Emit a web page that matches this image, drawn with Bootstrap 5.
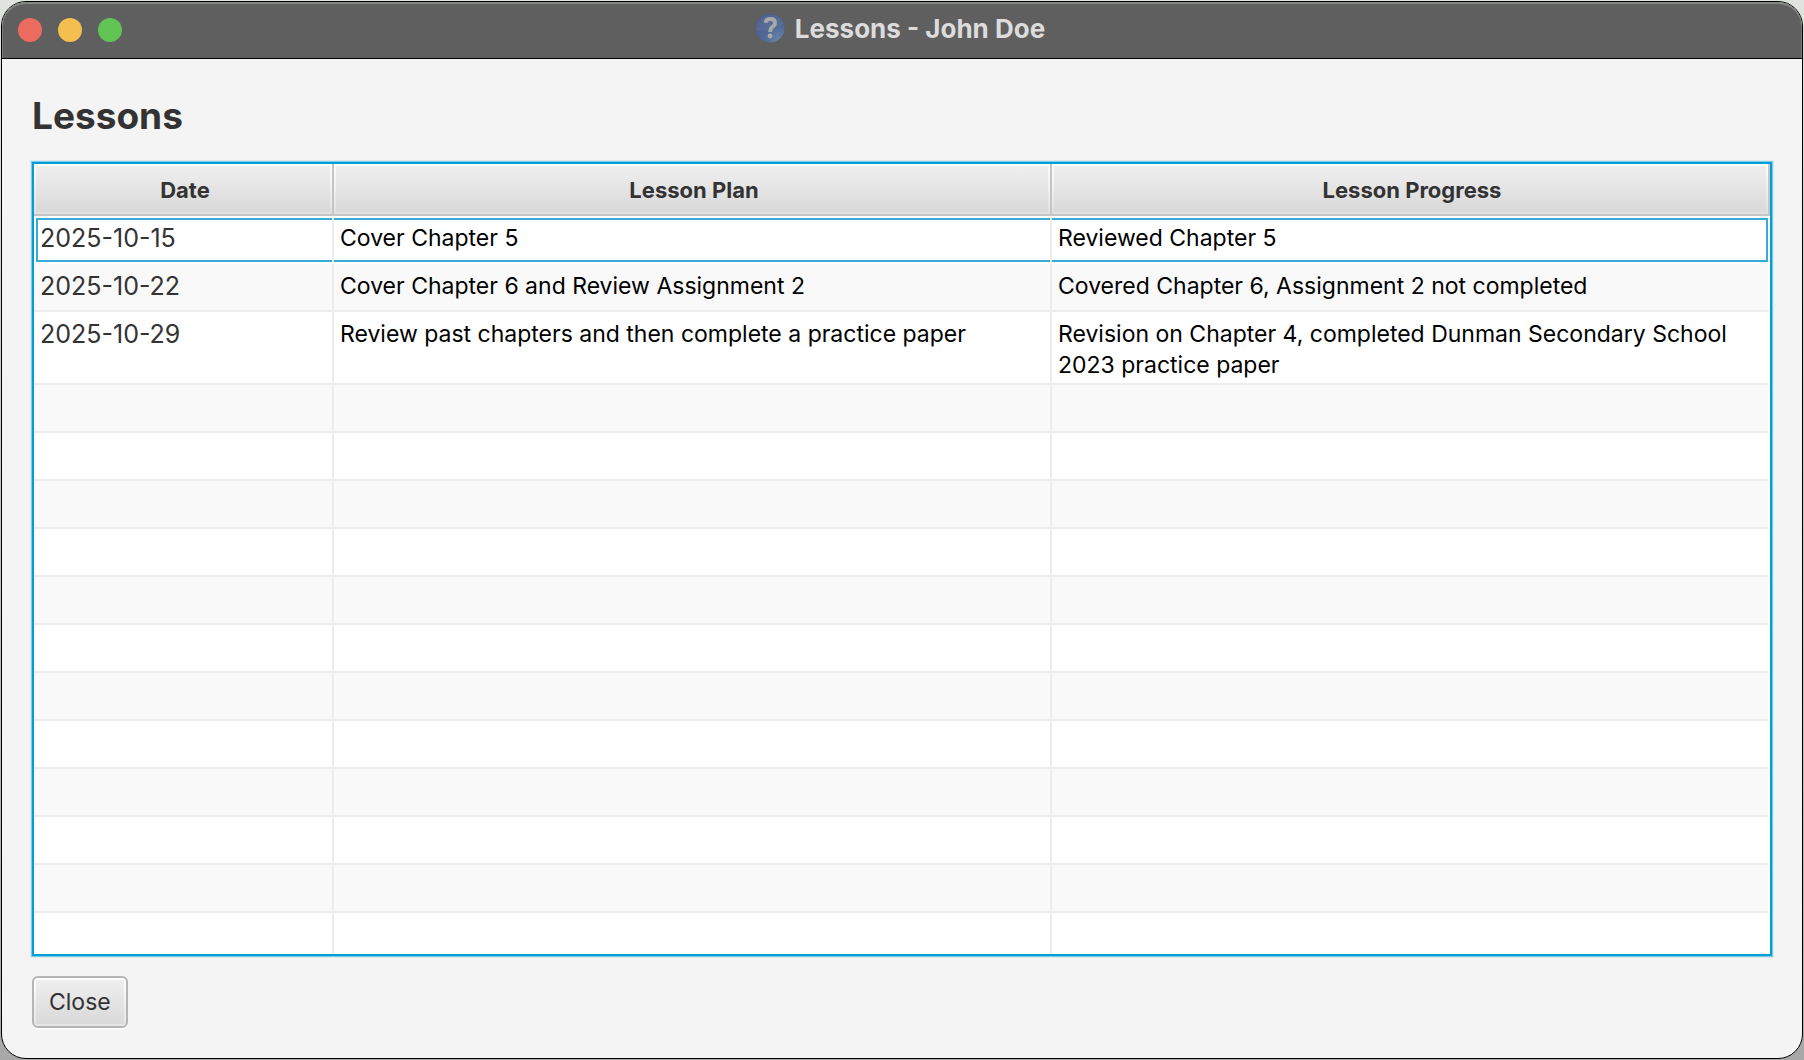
<!DOCTYPE html>
<html lang="en">
<head>
<meta charset="utf-8">
<meta name="viewport" content="width=device-width, initial-scale=1">
<title>Lessons - John Doe</title>
<link href="https://cdn.jsdelivr.net/npm/bootstrap@5.3.0/dist/css/bootstrap.min.css" rel="stylesheet">
<style>
  body {
    font-family: Inter, "Liberation Sans", sans-serif;
    font-size: 23px;
    line-height: 31px;
    color: #333;
    background: linear-gradient(#e0e4df, #a8a8a8);
  }
  .desktop { padding: 1px; }
  .app-window {
    background: #f4f4f4;
    border: 1px solid #000;
    border-radius: 25px;
  }
  .title-bar {
    height: 57px;
    padding: 0 16px;
    background: #5f5f5f;
    border-bottom: 1px solid #000;
    box-shadow: inset 0 2px 0 #848783, inset 1px 0 0 #7c7c7c, inset -1px 0 0 #7c7c7c;
    border-radius: 24px 24px 0 0;
  }
  .window-dots { flex: 1 1 0; gap: 16px; }
  .window-dot { width: 24px; height: 24px; border: 0; padding: 0; border-radius: 50%; }
  .dot-close { background: #ed6a5e; }
  .dot-minimize { background: #f5bf4f; }
  .dot-zoom { background: #61c454; }
  .window-title { font-size: 26px; font-weight: 700; color: #dcdcdc; gap: 10px; padding: 0 4px 4px 0; }
  .window-body { padding: 30px; gap: 20px; min-height: 0; }
  .window-content { min-height: 0; gap: 20px; }
  .page-title { font-size: 37px; line-height: 53px; font-weight: 700; color: #333; }

  .table-view {
    min-height: 0;
    background: #fff;
    border: 2px solid #039ed3;
    box-shadow: 0 0 0 1px #7dcbe6, 0 0 0 2px #dcebf1;
  }
  .lesson-table { table-layout: fixed; border-collapse: separate; border-spacing: 0; }
  .lesson-table .date-col { width: 300px; }
  .lesson-table th {
    height: 52px;
    padding: 2px 4px 0 8px;
    font-size: 22px;
    font-weight: 700;
    text-align: center;
    vertical-align: middle;
    border-right: 2px solid #c5c5c5;
    border-bottom: 2px solid #c5c5c5;
    background:
      linear-gradient(#efefef, #d9d9d9) 2px 2px / calc(100% - 4px) calc(100% - 4px) no-repeat padding-box,
      linear-gradient(#fff, #e0e0e0) padding-box;
  }
  .lesson-table td {
    height: 48px;
    padding: 7px 6px 2px;
    color: #000;
    vertical-align: top;
    border-right: 2px solid #ededed;
    border-bottom: 2px solid #ededed;
  }
  .lesson-table td:first-child { font-size: 25px; color: #333; }
  .lesson-table td:last-child { border-right-color: #fff; }
  .lesson-table tbody tr:nth-child(even) td { background: #f9f9f9; }
  .lesson-table .focused-row td {
    padding-top: 5px;
    border-top: 2px solid #fff;
    border-bottom-color: #fff;
    box-shadow: inset 0 2px 0 #35abd8, inset 0 -2px 0 #35abd8;
  }
  .lesson-table .focused-row td:first-child {
    padding-left: 4px;
    border-left: 2px solid #fff;
    box-shadow: inset 2px 0 0 #35abd8, inset 0 2px 0 #35abd8, inset 0 -2px 0 #35abd8;
  }
  .lesson-table .focused-row td:last-child {
    box-shadow: inset -2px 0 0 #35abd8, inset 0 2px 0 #35abd8, inset 0 -2px 0 #35abd8;
  }

  .close-btn {
    height: 52px;
    padding: 0 15px;
    font-size: 23px;
    line-height: 31px;
    color: #333;
    border: 2px solid #b5b5b5;
    border-radius: 6px;
    background:
      linear-gradient(#efefef, #d9d9d9) 2px 2px / calc(100% - 4px) calc(100% - 4px) no-repeat padding-box,
      linear-gradient(#fff, #e4e4e4) padding-box;
    box-shadow: 0 2px 0 #fbfbfb;
  }
  .close-btn:hover { color: #333; border-color: #999; }
</style>
</head>
<body>
<div class="desktop vh-100 d-flex">
  <div class="app-window d-flex flex-column flex-grow-1 overflow-hidden">
    <header class="title-bar d-flex align-items-center flex-shrink-0">
      <div class="window-dots d-flex">
        <button type="button" class="window-dot dot-close" aria-label="Close window"></button>
        <button type="button" class="window-dot dot-minimize" aria-label="Minimize window"></button>
        <button type="button" class="window-dot dot-zoom" aria-label="Zoom window"></button>
      </div>
      <div class="window-title d-flex align-items-center">
        <svg width="30" height="30" viewBox="0 0 30 30" aria-hidden="true">
          <defs>
            <radialGradient id="orb" cx="0.8" cy="0.9" r="0.9">
              <stop offset="0" stop-color="#6685aa"/>
              <stop offset="0.5" stop-color="#526a98"/>
              <stop offset="1" stop-color="#4d5d8e"/>
            </radialGradient>
          </defs>
          <circle cx="15" cy="15" r="14.5" fill="url(#orb)"/>
          <path d="M1 18A14.500 14.500 0 0 1 28.500 10Q22 17 1 18Z" fill="#8793b5" opacity=".15"/>
          <path d="M10.500 9.800Q11 6 15.400 6Q20 6 20 9.800Q20 12.300 17.300 14Q15.200 15.400 15.200 19" fill="none" stroke="#a9aaa8" stroke-width="3.800"/>
          <circle cx="15.100" cy="23" r="2.400" fill="#a9aaa8"/>
        </svg>
        <span>Lessons - John Doe</span>
      </div>
      <div class="window-dots"></div>
    </header>
    <main class="window-body d-flex flex-column flex-grow-1 align-items-start">
      <div class="window-content d-flex flex-column flex-grow-1 w-100">
        <h1 class="page-title mb-0">Lessons</h1>
        <div class="table-view flex-grow-1 overflow-hidden">
          <table class="lesson-table w-100">
            <thead>
              <tr><th scope="col" class="date-col">Date</th><th scope="col">Lesson Plan</th><th scope="col">Lesson Progress</th></tr>
            </thead>
            <tbody>
              <tr class="focused-row"><td>2025-10-15</td><td>Cover Chapter 5</td><td>Reviewed Chapter 5</td></tr>
              <tr><td>2025-10-22</td><td>Cover Chapter 6 and Review Assignment 2</td><td>Covered Chapter 6, Assignment 2 not completed</td></tr>
              <tr><td>2025-10-29</td><td>Review past chapters and then complete a practice paper</td><td>Revision on Chapter 4, completed Dunman Secondary School 2023 practice paper</td></tr>
              <tr><td></td><td></td><td></td></tr>
              <tr><td></td><td></td><td></td></tr>
              <tr><td></td><td></td><td></td></tr>
              <tr><td></td><td></td><td></td></tr>
              <tr><td></td><td></td><td></td></tr>
              <tr><td></td><td></td><td></td></tr>
              <tr><td></td><td></td><td></td></tr>
              <tr><td></td><td></td><td></td></tr>
              <tr><td></td><td></td><td></td></tr>
              <tr><td></td><td></td><td></td></tr>
              <tr><td></td><td></td><td></td></tr>
              <tr><td></td><td></td><td></td></tr>
            </tbody>
          </table>
        </div>
      </div>
      <button type="button" class="btn close-btn flex-shrink-0">Close</button>
    </main>
  </div>
</div>
<script src="https://cdn.jsdelivr.net/npm/bootstrap@5.3.0/dist/js/bootstrap.bundle.min.js"></script>
</body>
</html>
